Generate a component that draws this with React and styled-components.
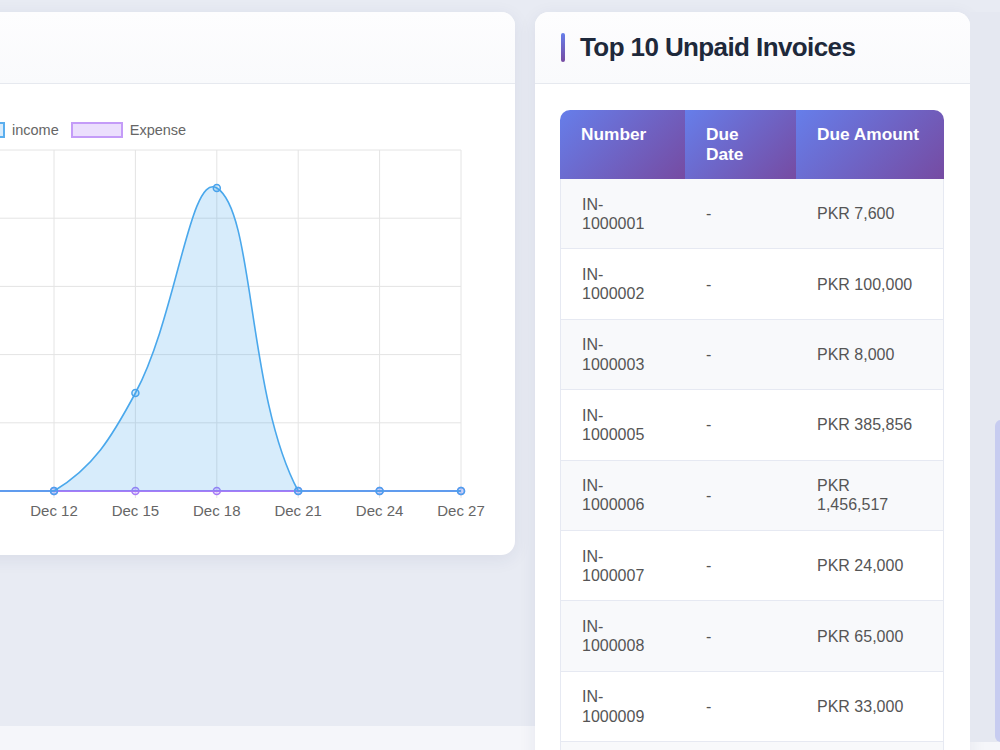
import React from 'react';
import styled, { createGlobalStyle } from 'styled-components';

const GlobalStyle = createGlobalStyle`
  body {
    margin: 0;
    padding: 0;
    background: #f5f6fa;
    font-family: "Liberation Sans", Arial, sans-serif;
  }
`;

const Page = styled.main`
  height: 750px;
  overflow: hidden;
  box-sizing: border-box;
  padding-top: 12px;
  background: linear-gradient(180deg, #e8ebf3 0px, #e8ebf3 726px, #f5f6fa 726px);
`;

const Row = styled.div`
  display: flex;
  align-items: flex-start;
  gap: 20px;
  margin-left: -100px;
`;

const Card = styled.div`
  flex: 0 0 ${(p) => p.$width}px;
  background: #fff;
  border-radius: 14px;
  overflow: hidden;
  box-shadow: 0 4px 18px rgba(40, 50, 100, 0.08);
`;

const CardHeader = styled.div`
  height: 71px;
  display: flex;
  align-items: center;
  gap: 15px;
  padding: 0 26px;
  border-bottom: 1px solid #e6e9ef;
  background: linear-gradient(180deg, #fdfdfe 0%, #f9fafc 100%);
`;

const Accent = styled.span`
  width: 4px;
  height: 29px;
  border-radius: 2px;
  background: linear-gradient(180deg, #667eea 0%, #764ba2 100%);
`;

const Title = styled.h2`
  margin: 0;
  font-size: 26px;
  font-weight: 700;
  letter-spacing: -0.6px;
  color: #1e293b;
`;

const ChartBody = styled.div`
  padding-top: 38px;
`;

const Legend = styled.div`
  display: flex;
  align-items: center;
  gap: 12px;
  height: 16px;
  padding-left: 53px;
  margin-bottom: 2px;
`;

const LegendItem = styled.div`
  display: flex;
  align-items: center;
  gap: 7px;
  font-size: 14.5px;
  color: #666;
`;

const LegendBox = styled.span`
  width: 52px;
  height: 16px;
  box-sizing: border-box;
  border: 2px solid ${(p) => p.$line};
  background: ${(p) => p.$fill};
`;

const TableBody = styled.div`
  padding: 26px 26px 26px 25px;
`;

const Table = styled.table`
  width: 100%;
  table-layout: fixed;
  border-collapse: separate;
  border-spacing: 0;
  font-size: 16px;

  th {
    padding: 14px 21px 15px;
    text-align: left;
    vertical-align: top;
    font-size: 17.3px;
    line-height: 20px;
    font-weight: 700;
    color: #fff;
    background: linear-gradient(135deg, #667eea 0%, #764ba2 100%);
  }
  th:first-child { border-top-left-radius: 10px; }
  th:last-child { border-top-right-radius: 10px; }

  td {
    padding: 15.5px 21px;
    line-height: 19.2px;
    color: #555;
    vertical-align: middle;
    border-bottom: 1px solid #e6e9f2;
  }
  td:first-child { border-left: 1px solid #e6e9f2; }
  td:last-child { border-right: 1px solid #e6e9f2; }
  tbody tr:nth-child(odd) td { background: #f8f9fb; }
`;

const SideStrip = styled.div`
  flex: 0 0 40px;
  margin-left: -20px;
  height: 730px;
  padding-left: 25px;
  box-sizing: border-box;
  background: #e5e8f1;
`;

const ScrollThumb = styled.div`
  margin-top: 408px;
  height: 322px;
  border-radius: 6px 0 0 6px;
  background: #c7ccf0;
`;

const invoices = [
  ['1000001', '7,600'],
  ['1000002', '100,000'],
  ['1000003', '8,000'],
  ['1000005', '385,856'],
  ['1000006', '1,456,517'],
  ['1000007', '24,000'],
  ['1000008', '65,000'],
  ['1000009', '33,000'],
  ['1000010', '12,500'],
  ['1000011', '5,000'],
];

// chart coordinates are page pixels; the svg group is shifted into the card
const STEP = 81.4;
const xs = [-3, -2, -1, 0, 1, 2, 3, 4, 5].map((i) => 54 + i * STEP);
const labels = ['', '', '', 'Dec 12', 'Dec 15', 'Dec 18', 'Dec 21', 'Dec 24', 'Dec 27'];
const gridY = [150, 218.2, 286.4, 354.6, 422.8, 491];
const BASE = 491;
const incomeY = [BASE, BASE, BASE, BASE, 393, 188, BASE, BASE, BASE];

const incomeLine =
  `M ${xs[0]} ${BASE} L 54 ${BASE} ` +
  `C 93.7 467.1, 111.6 437.4, 135.4 393 ` +
  `C 176.7 316.2, 189.9 171.8, 216.8 188 ` +
  `C 255 211, 246.5 394.6, 298.2 491 L 461 ${BASE}`;

function IncomeChart() {
  return (
    <svg width="615" height="415" viewBox="0 0 615 415">
      <g transform="translate(100,-140)">
        {gridY.map((y) => (
          <line key={y} x1={-140} x2={461} y1={y} y2={y} stroke="#e4e4e4" strokeWidth="1" />
        ))}
        {xs.map((x) => (
          <line key={x} x1={x} x2={x} y1={150} y2={498} stroke="#e4e4e4" strokeWidth="1" />
        ))}
        {xs.map((x, i) =>
          labels[i] ? (
            <text key={labels[i]} x={x} y={516} textAnchor="middle" fontSize="15" fill="#666"
              fontFamily='"Liberation Sans", Arial, sans-serif'>
              {labels[i]}
            </text>
          ) : null
        )}

        <line x1={xs[0]} x2={461} y1={BASE} y2={BASE} stroke="#a77bf7" strokeWidth="2" />
        {xs.map((x) => (
          <circle key={x} cx={x} cy={BASE} r="3.5" fill="rgba(153,102,255,0.2)" stroke="#a77bf7" strokeWidth="1.5" />
        ))}

        <path d={`${incomeLine} Z`} fill="rgba(54,162,235,0.2)" stroke="none" />
        <path d={incomeLine} fill="none" stroke="#4aa8ec" strokeWidth="1.6" />
        {xs.map((x, i) => (
          <circle key={x} cx={x} cy={incomeY[i]} r="3.5" fill="rgba(54,162,235,0.2)" stroke="#4aa3ec" strokeWidth="1.5" />
        ))}
      </g>
    </svg>
  );
}

export default function App() {
  return (
    <>
      <GlobalStyle />
      <Page>
        <Row>
          <Card $width={615} style={{ height: 543 }}>
            <CardHeader />
            <ChartBody>
              <Legend>
                <LegendItem>
                  <LegendBox $line="#5aaeee" $fill="#d8ebfb" />
                  income
                </LegendItem>
                <LegendItem>
                  <LegendBox $line="#c49cf8" $fill="#ebdffd" />
                  Expense
                </LegendItem>
              </Legend>
              <IncomeChart />
            </ChartBody>
          </Card>

          <Card $width={435}>
            <CardHeader>
              <Accent />
              <Title>Top 10 Unpaid Invoices</Title>
            </CardHeader>
            <TableBody>
              <Table>
                <colgroup>
                  <col style={{ width: 125 }} />
                  <col style={{ width: 111 }} />
                  <col style={{ width: 148 }} />
                </colgroup>
                <thead>
                  <tr>
                    <th>Number</th>
                    <th>Due Date</th>
                    <th>Due Amount</th>
                  </tr>
                </thead>
                <tbody>
                  {invoices.map(([num, amount]) => (
                    <tr key={num}>
                      <td>IN-<wbr />{num}</td>
                      <td>-</td>
                      <td>PKR {amount}</td>
                    </tr>
                  ))}
                </tbody>
              </Table>
            </TableBody>
          </Card>

          <SideStrip>
            <ScrollThumb />
          </SideStrip>
        </Row>
      </Page>
    </>
  );
}
